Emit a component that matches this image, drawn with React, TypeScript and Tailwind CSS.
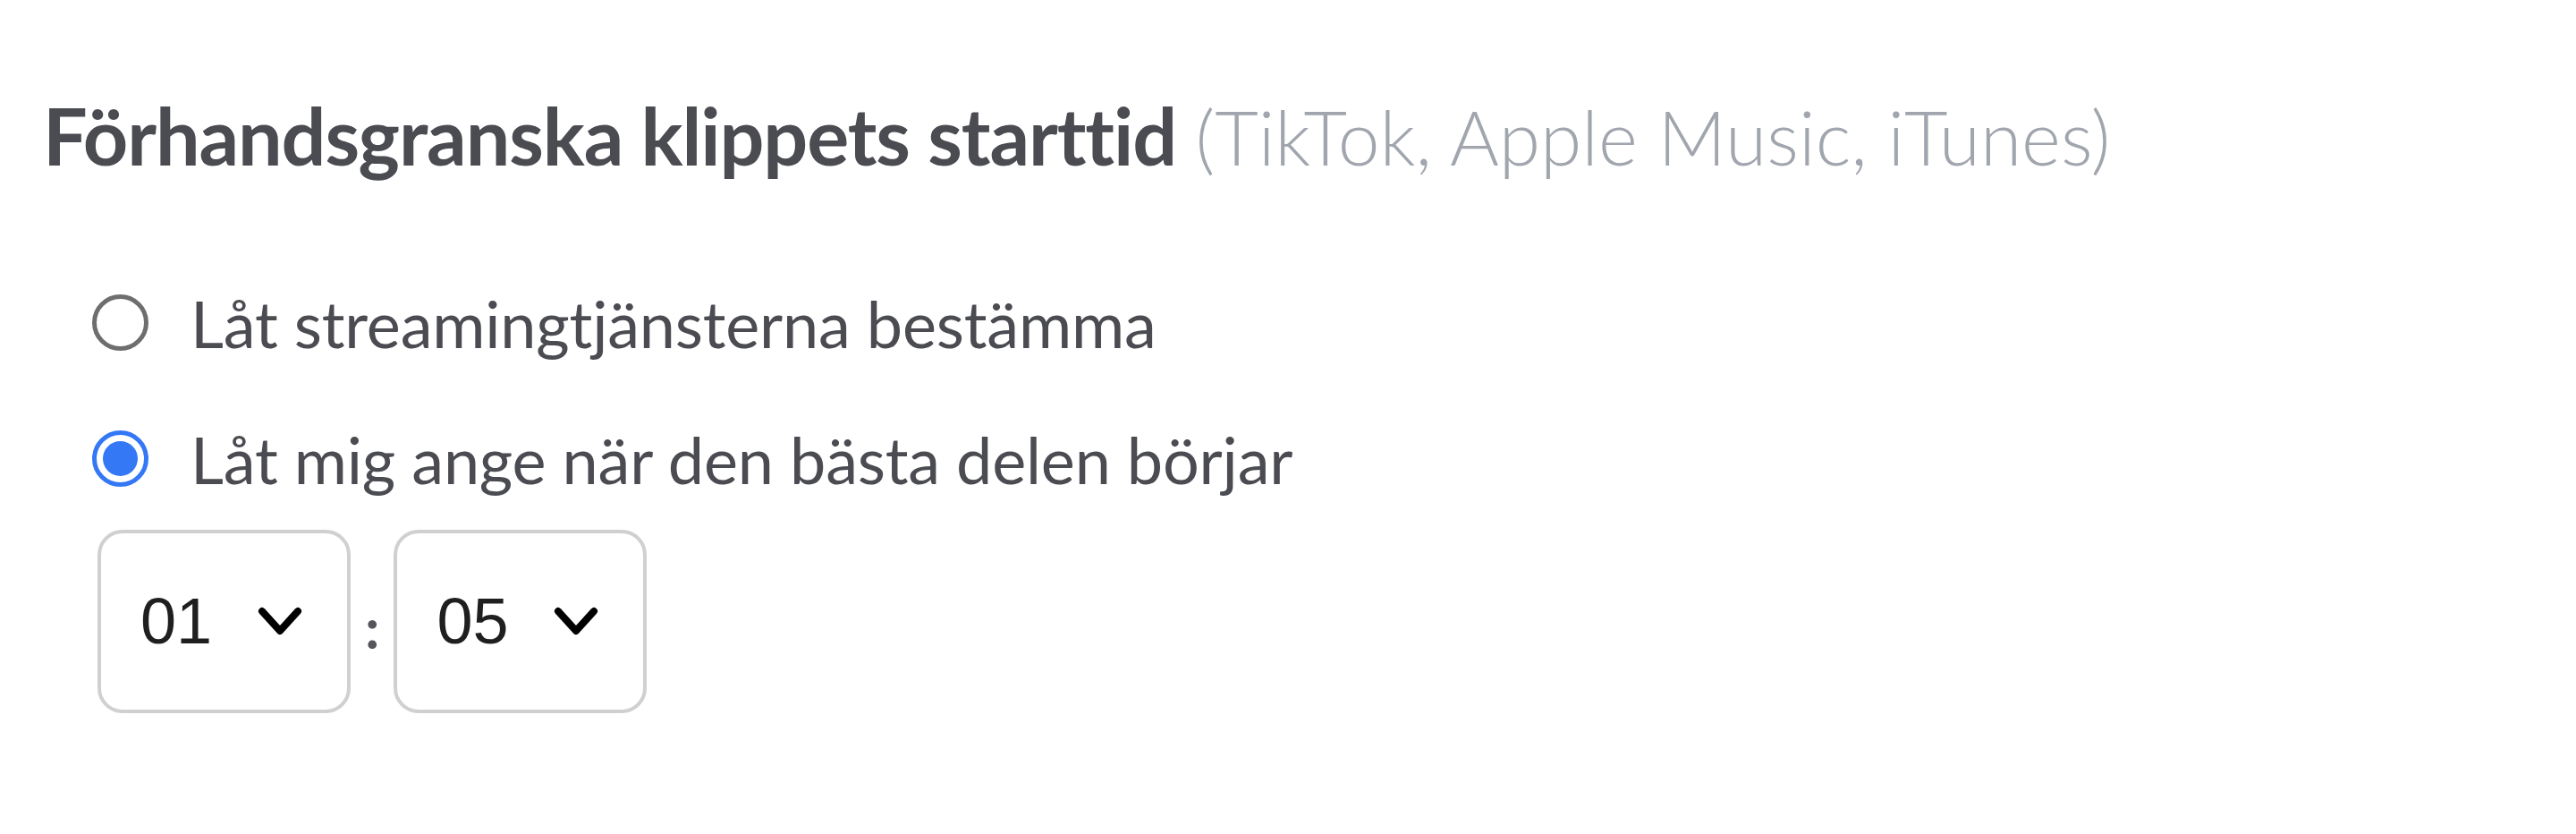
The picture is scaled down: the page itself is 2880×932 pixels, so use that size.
import { useState } from "react";

function Chevron() {
  return (
    <svg width="50" height="32" viewBox="0 0 50 32" fill="none" className="shrink-0">
      <path d="M5 5 L25 27 L45 5" stroke="#000" strokeWidth="8" strokeLinecap="round" strokeLinejoin="round" />
    </svg>
  );
}

function Radio({ checked }: { checked: boolean }) {
  return checked ? (
    <span className="flex h-[63px] w-[63px] shrink-0 items-center justify-center rounded-full border-[5px] border-[#3478f6] bg-white">
      <span className="h-[39px] w-[39px] rounded-full bg-[#3478f6]" />
    </span>
  ) : (
    <span className="h-[63px] w-[63px] shrink-0 rounded-full border-[5px] border-[#6e6e6e] bg-white" />
  );
}

function TimeSelect({ value }: { value: string }) {
  return (
    <div className="flex h-[205px] w-[283px] items-center justify-between rounded-[28px] border-4 border-[#d0d0d0] bg-white pl-[44px] pr-[50px] font-['Liberation_Sans',Arial,sans-serif] text-[72px] text-[#1f1f1f]">
      <span>{value}</span>
      <Chevron />
    </div>
  );
}

export default function App() {
  const [choice, setChoice] = useState("custom");
  const options = [
    { id: "auto", label: "Låt streamingtjänsterna bestämma" },
    { id: "custom", label: "Låt mig ange när den bästa delen börjar" },
  ];

  return (
    <div className="min-h-[932px] bg-white px-[48px] pt-[99px] font-['Lato','Noto_Sans',sans-serif] [font-variant-ligatures:none]">
      <h2 className="text-[88px] font-bold leading-[1.2] text-[#4b4c52]">
        <span className="tracking-[-1.1px]">Förhandsgranska klippets starttid</span>{" "}
        <span className="text-[84px] font-light text-[#a1a5ae]">(TikTok, Apple Music, iTunes)</span>
      </h2>

      <div className="mt-[113px] flex flex-col gap-[66px] pl-[55px]">
        {options.map((option) => (
          <label
            key={option.id}
            className="flex cursor-pointer items-center gap-[47px] text-[72px] leading-[86px] tracking-[-0.2px] text-[#4b4c52]"
            onClick={() => setChoice(option.id)}
          >
            <Radio checked={choice === option.id} />
            <span>{option.label}</span>
          </label>
        ))}
      </div>

      <div className="mt-[36px] flex items-center gap-[16px] pl-[61px]">
        <TimeSelect value="01" />
        <span className="mt-[14px] text-[64px] font-bold text-[#55565c]">:</span>
        <TimeSelect value="05" />
      </div>
    </div>
  );
}
